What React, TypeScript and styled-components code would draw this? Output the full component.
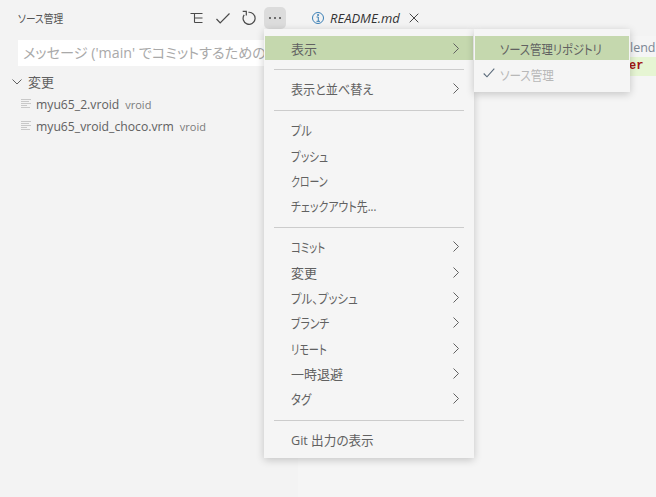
import React from "react";
import styled, { createGlobalStyle } from "styled-components";

const Global = createGlobalStyle`
  html, body { margin: 0; padding: 0; background: #f5f5f5; }
  * { box-sizing: border-box; }
  body {
    font-family: "Open Sans", "Noto Sans CJK JP", sans-serif;
    font-feature-settings: "palt";
  }
`;

const Window = styled.div`
  position: relative;
  width: 656px;
  height: 497px;
  overflow: hidden;
  display: flex;
  background: #f5f5f5;
  color: #616161;
`;

const Sidebar = styled.aside`
  width: 298px;
  flex: none;
  background: #f3f3f3;
  display: flex;
  flex-direction: column;
`;

const SideHeader = styled.header`
  height: 36px;
  padding-left: 18px;
  display: flex;
  align-items: center;
  justify-content: space-between;
  font-size: 11px;
  color: #555;
`;

const HeaderTitle = styled.span`
  display: inline-block;
  transform: scaleX(0.88);
  transform-origin: left center;
`;

const Actions = styled.div`
  display: flex;
  align-items: center;
  padding-right: 12px;
  gap: 4px;
`;

const ActionButton = styled.button<{ $active?: boolean }>`
  width: 22px;
  height: 22px;
  padding: 0;
  border: 0;
  border-radius: 5px;
  display: flex;
  align-items: center;
  justify-content: center;
  color: #4a4a4a;
  background: ${(p) => (p.$active ? "#dcdcdc" : "transparent")};
`;

const MessageBox = styled.div`
  margin: 4px 14px 0 18px;
  height: 26px;
  padding-left: 5px;
  background: #fff;
  font-size: 14.2px;
  line-height: 26px;
  color: #a9a9a9;
  white-space: nowrap;
`;

const GroupHeader = styled.div`
  margin-top: 4px;
  height: 23px;
  padding-left: 12px;
  display: flex;
  align-items: center;
  gap: 6px;
  font-size: 13px;
  color: #616161;
`;

const FileRow = styled.div`
  height: 22px;
  padding-left: 21px;
  display: flex;
  align-items: center;
  font-size: 12.2px;
  color: #616161;
  white-space: nowrap;
`;

const FileName = styled.span`
  margin-left: 5px;
`;

const FileHint = styled.span`
  margin-left: 6px;
  font-size: 11px;
  color: #7b7b7b;
`;

const Editor = styled.main`
  flex: 1;
  min-width: 0;
  display: flex;
  flex-direction: column;
`;

const TabBar = styled.div`
  height: 36px;
  padding-left: 14px;
  display: flex;
  align-items: center;
  background: #f3f3f3;
  font-size: 13px;
  color: #333;
`;

const TabName = styled.span`
  margin: 0 9px 0 6px;
  font-style: italic;
`;

const CodeArea = styled.div`
  padding-top: 2px;
`;

const CodeLine = styled.div`
  height: 19px;
  padding-left: 332px;
  line-height: 19px;
  white-space: nowrap;
  font-size: 12.5px;
  color: #7b8794;
`;

const MatchLine = styled.div`
  height: 19px;
  padding-left: 331px;
  white-space: nowrap;
  background: #e6f5d3;
  color: #a31515;
  font: 700 12px/19px "Liberation Mono", monospace;
`;

const Menu = styled.div<{ $left: number; $width: number }>`
  position: absolute;
  top: 29px;
  left: ${(p) => p.$left}px;
  width: ${(p) => p.$width}px;
  padding: 6.4px 0 5.6px;
  display: flex;
  flex-direction: column;
  background: #f5f5f5;
  box-shadow: 0 2px 8px rgba(0, 0, 0, 0.2);
  font-size: 13px;
`;

const SubMenu = styled(Menu)`
  gap: 1px;
  padding-bottom: 5px;
`;

const Item = styled.div<{ $hl?: boolean; $off?: boolean; $inset?: number }>`
  position: relative;
  flex: none;
  height: 23.33px;
  margin: 1px;
  padding-left: ${(p) => p.$inset ?? 26}px;
  padding-right: 14px;
  display: flex;
  align-items: center;
  justify-content: space-between;
  white-space: nowrap;
  background: ${(p) => (p.$hl ? "#c5d8ae" : "transparent")};
  color: ${(p) => (p.$off ? "#b8b8b8" : "#616161")};
`;

const ItemLabel = styled.span<{ $squeeze?: number }>`
  display: inline-block;
  transform: scaleX(${(p) => p.$squeeze ?? 1});
  transform-origin: left center;
`;

const CheckMark = styled.span`
  position: absolute;
  left: 8px;
  top: 5px;
  display: flex;
  color: #5a6a7a;
`;

const Sep = styled.hr`
  flex: none;
  height: 1px;
  margin: 8.4px 10px 6.2px;
  border: 0;
  background: #cccccc;
`;

const Stroke = styled.svg`
  display: block;
  flex: none;
  fill: none;
  stroke: currentColor;
`;

const TreeIcon = () => (
  <Stroke width="16" height="16" viewBox="0 0 16 16" strokeWidth="1.1">
    <path d="M1.5 3.5H13.5M5.5 3.5V12.5M5.5 8H13.5M5.5 12.5H13.5" />
  </Stroke>
);
const CheckIcon = () => (
  <Stroke width="16" height="16" viewBox="0 0 16 16" strokeWidth="1.2">
    <path d="M1.5 9L5.2 13L14.5 3.5" />
  </Stroke>
);
const RefreshIcon = () => (
  <Stroke width="16" height="16" viewBox="0 0 16 16" strokeWidth="1.2">
    <path d="M7.5 2.3A6 6 0 1 1 3.2 4.8M1.7 1.3H5.3V5.5" />
  </Stroke>
);
const DotsIcon = () => (
  <Stroke width="16" height="16" viewBox="0 0 16 16" strokeWidth="0" style={{ fill: "currentColor" }}>
    <circle cx="3" cy="8" r="1" />
    <circle cx="8" cy="8" r="1" />
    <circle cx="13" cy="8" r="1" />
  </Stroke>
);
const ChevronDown = () => (
  <Stroke width="10" height="6" viewBox="0 0 10 6" strokeWidth="1">
    <path d="M.5 .5L5 5L9.5 .5" />
  </Stroke>
);
const ChevronRight = () => (
  <Stroke width="6" height="11" viewBox="0 0 6 11" strokeWidth="1">
    <path d="M.5 .5L5.5 5.5L.5 10.5" />
  </Stroke>
);
const FileLines = () => (
  <Stroke width="10" height="10" viewBox="0 0 10 10" strokeWidth="1" style={{ color: "#c8c8c8" }}>
    <path d="M0 .5H10M0 2.5H8M0 4.5H10M0 6.5H6M0 8.5H9" />
  </Stroke>
);
const InfoIcon = () => (
  <Stroke width="12" height="12" viewBox="0 0 12 12" strokeWidth="1" style={{ color: "#3a7fb5" }}>
    <circle cx="6" cy="6" r="5.5" />
    <path d="M4.5 5H6.3V9.3M4.5 9.3H8M5.6 2.5H6.6V3.5H5.6Z" />
  </Stroke>
);
const CloseIcon = () => (
  <Stroke width="10" height="10" viewBox="0 0 10 10" strokeWidth="1" style={{ color: "#444" }}>
    <path d="M.7 .7L9.3 9.3M9.3 .7L.7 9.3" />
  </Stroke>
);
const SmallCheck = () => (
  <Stroke width="12" height="10" viewBox="0 0 12 10" strokeWidth="1.1">
    <path d="M.7 5.5L4 8.8L11.3 .7" />
  </Stroke>
);

type Entry = { label: string; sub?: boolean; hl?: boolean; squeeze?: number } | "sep";

const mainMenu: Entry[] = [
  { label: "表示", sub: true, hl: true },
  "sep",
  { label: "表示と並べ替え", sub: true, squeeze: 0.93 },
  "sep",
  { label: "プル", squeeze: 0.87 },
  { label: "プッシュ", squeeze: 0.82 },
  { label: "クローン", squeeze: 0.76 },
  { label: "チェックアウト先...", squeeze: 0.84 },
  "sep",
  { label: "コミット", squeeze: 0.79, sub: true },
  { label: "変更", sub: true },
  { label: "プル、プッシュ", squeeze: 0.88, sub: true },
  { label: "ブランチ", squeeze: 0.83, sub: true },
  { label: "リモート", squeeze: 0.78, sub: true },
  { label: "一時退避", sub: true },
  { label: "タグ", squeeze: 0.87, sub: true },
  "sep",
  { label: "Git 出力の表示", squeeze: 0.97 },
];

export default function App() {
  return (
    <Window>
      <Global />
      <Sidebar>
        <SideHeader>
          <HeaderTitle>ソース管理</HeaderTitle>
          <Actions>
            <ActionButton><TreeIcon /></ActionButton>
            <ActionButton><CheckIcon /></ActionButton>
            <ActionButton><RefreshIcon /></ActionButton>
            <ActionButton $active><DotsIcon /></ActionButton>
          </Actions>
        </SideHeader>
        <MessageBox>メッセージ ('main' でコミットするための</MessageBox>
        <GroupHeader><ChevronDown />変更</GroupHeader>
        <FileRow>
          <FileLines />
          <FileName>myu65_2.vroid</FileName>
          <FileHint>vroid</FileHint>
        </FileRow>
        <FileRow>
          <FileLines />
          <FileName>myu65_vroid_choco.vrm</FileName>
          <FileHint>vroid</FileHint>
        </FileRow>
      </Sidebar>
      <Editor>
        <TabBar>
          <InfoIcon />
          <TabName>README.md</TabName>
          <CloseIcon />
        </TabBar>
        <CodeArea>
          <CodeLine>lend</CodeLine>
          <MatchLine>er</MatchLine>
        </CodeArea>
      </Editor>
      <Menu $left={264} $width={210}>
        {mainMenu.map((e, i) =>
          e === "sep" ? (
            <Sep key={i} />
          ) : (
            <Item key={i} $hl={e.hl}>
              <ItemLabel $squeeze={e.squeeze}>{e.label}</ItemLabel>
              {e.sub && <ChevronRight />}
            </Item>
          )
        )}
      </Menu>
      <SubMenu $left={474} $width={156}>
        <Item $hl $inset={25}>
          <ItemLabel $squeeze={0.87}>ソース管理リポジトリ</ItemLabel>
        </Item>
        <Item $off $inset={25}>
          <CheckMark><SmallCheck /></CheckMark>
          <ItemLabel $squeeze={0.89}>ソース管理</ItemLabel>
        </Item>
      </SubMenu>
    </Window>
  );
}
